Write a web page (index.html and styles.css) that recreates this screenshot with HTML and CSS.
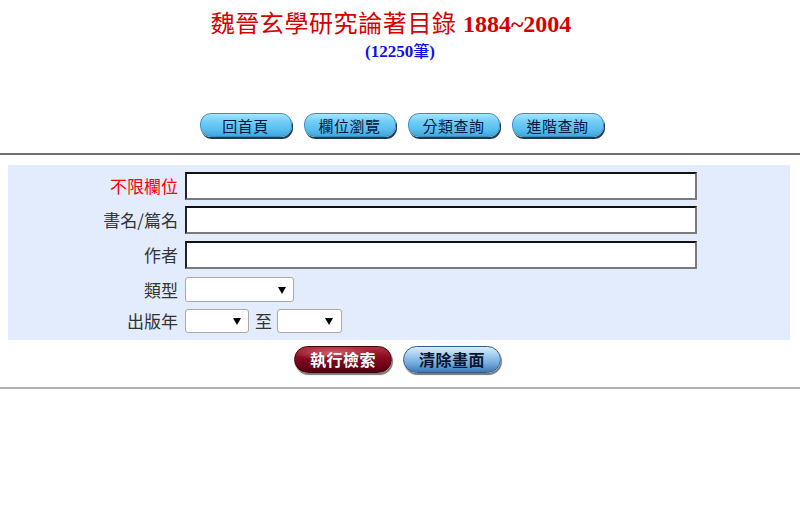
FILE: index.html
```html
<!DOCTYPE html>
<html lang="zh-Hant">
<head>
<meta charset="utf-8">
<title>魏晉玄學研究論著目錄</title>
<link rel="stylesheet" href="styles.css">
</head>
<body>
<header class="head">
  <h1 class="title"><span class="title-zh">魏晉玄學研究論著目錄</span> <span class="title-num">1884~2004</span></h1>
  <div class="count">(12250<span class="count-zh">筆</span>)</div>
</header>
<nav class="nav">
  <a class="nav-btn" href="#">回首頁</a>
  <a class="nav-btn" href="#">欄位瀏覽</a>
  <a class="nav-btn" href="#">分類查詢</a>
  <a class="nav-btn" href="#">進階查詢</a>
</nav>
<hr class="rule rule-top">
<form class="search">
  <div class="panel">
    <div class="row row1">
      <label class="lbl lbl-red">不限欄位</label>
      <input class="txt" type="text">
    </div>
    <div class="row row2">
      <label class="lbl">書名/篇名</label>
      <input class="txt" type="text">
    </div>
    <div class="row row3">
      <label class="lbl">作者</label>
      <input class="txt" type="text">
    </div>
    <div class="row row4">
      <label class="lbl">類型</label>
      <span class="sel sel-type"><select><option></option></select></span>
    </div>
    <div class="row row5">
      <label class="lbl">出版年</label>
      <span class="sel sel-year"><select><option></option></select></span>
      <span class="to">至</span>
      <span class="sel sel-year2"><select><option></option></select></span>
    </div>
  </div>
  <div class="actions">
    <button type="button" class="act act-go">執行檢索</button>
    <button type="button" class="act act-clear">清除畫面</button>
  </div>
</form>
<hr class="rule rule-bottom">
</body>
</html>
```
FILE: styles.css
```css
html, body {
  margin: 0;
  padding: 0;
  background: #ffffff;
}
body {
  font-family: "Noto Sans CJK TC", "Noto Sans", sans-serif;
  color: #333;
}
.head {
  text-align: center;
  padding-top: 6px;
}
.title {
  margin: 0;
  font-size: 25px;
  line-height: 32px;
  color: #d40000;
  font-weight: normal;
  font-family: "Liberation Serif", "Noto Sans CJK TC", serif;
  padding-right: 18px;
}
.title-zh {
  font-family: "Noto Sans CJK TC", serif;
  font-weight: 400;
  font-size: 24px;
  letter-spacing: 0.6px;
}
.title-num {
  font-weight: bold;
  font-size: 24px;
}
.count {
  font-family: "Liberation Serif", "Noto Sans CJK TC", serif;
  font-weight: bold;
  font-size: 17px;
  line-height: 20px;
  color: #1010e6;
  margin-top: 0;
}
.count-zh {
  font-family: "Noto Sans CJK TC", sans-serif;
  font-weight: 500;
  font-size: 16px;
}
.nav {
  display: flex;
  justify-content: center;
  gap: 12px;
  margin-top: 51px;
  padding-left: 3px;
}
.nav-btn {
  display: flex;
  align-items: center;
  justify-content: center;
  width: 90px;
  height: 22px;
  border-radius: 11px;
  background: linear-gradient(#a8e4ff 0%, #70cdf5 35%, #58bfee 70%, #3ea8dc 100%);
  border: 1px solid #3b8fc2;
  box-shadow: 1px 2px 0 #1b3a55;
  color: #06163f;
  font-size: 15px;
  text-decoration: none;
  letter-spacing: 0.5px;
}
.rule {
  border: 0;
  margin: 0;
  height: 2px;
}
.rule-top {
  background: #6f6f6f;
  margin-top: 16px;
}
.search {
  margin: 0;
}
.panel {
  margin: 10px 10px 0 8px;
  background: #e2ecfc;
  padding: 7px 0;
  display: flex;
  flex-direction: column;
}
.row {
  display: flex;
  align-items: center;
}
.row1 { height: 28px; }
.row2 { height: 28px; margin-top: 6px; }
.row3 { height: 28px; margin-top: 7px; }
.row4 { height: 25px; margin-top: 8px; }
.row5 { height: 24px; margin-top: 7px; }
.lbl {
  width: 170px;
  margin-right: 7px;
  text-align: right;
  font-size: 17px;
  line-height: 22px;
  color: #333;
  flex: none;
}
.lbl-red {
  color: #f00;
}
.txt {
  box-sizing: border-box;
  width: 512px;
  height: 28px;
  margin: 0;
  background: #fff;
  border-style: solid;
  border-width: 2px;
  border-color: #111 #7a7a7a #7a7a7a #222;
  padding: 0 4px;
  font-size: 15px;
  outline: none;
}
.sel {
  position: relative;
  display: inline-block;
}
.sel select {
  appearance: none;
  -webkit-appearance: none;
  box-sizing: border-box;
  display: block;
  background: #fff;
  border: 1px solid #a9a9a9;
  border-radius: 3px;
  margin: 0;
  padding: 0;
  font-size: 14px;
}
.sel::after {
  content: "";
  position: absolute;
  top: 50%;
  margin-top: -3px;
  width: 0;
  height: 0;
  border-left: 4px solid transparent;
  border-right: 4px solid transparent;
  border-top: 7px solid #000;
  pointer-events: none;
}
.sel-type select { width: 109px; height: 25px; }
.sel-type::after { right: 8px; }
.sel-year select { width: 64px; height: 24px; }
.sel-year::after { right: 8px; }
.sel-year2 select { width: 65px; height: 24px; }
.sel-year2::after { right: 9px; }
.to {
  font-size: 17px;
  line-height: 22px;
  margin: 0 5px 0 6px;
  color: #333;
}
.actions {
  display: flex;
  justify-content: center;
  gap: 11px;
  margin-top: 6px;
  padding-right: 5px;
}
.act {
  width: 98px;
  height: 27px;
  border-radius: 14px;
  font-family: "Noto Sans CJK TC", sans-serif;
  font-size: 16px;
  font-weight: bold;
  letter-spacing: 0.5px;
  padding: 0;
  line-height: 25px;
  cursor: pointer;
}
.act-go {
  background: radial-gradient(ellipse 60% 40% at 40% 25%, rgba(255,150,160,0.55), rgba(255,150,160,0) 70%), linear-gradient(#b03040 0%, #8a0c20 40%, #6a0014 80%, #4e000e 100%);
  border: 1px solid #4a0010;
  box-shadow: 1px 2px 1px #777;
  color: #fff;
}
.act-clear {
  background: linear-gradient(#d8eefc 0%, #a7d0f0 30%, #6ea5d8 70%, #3e78b2 100%);
  border: 1px solid #2e5f90;
  box-shadow: 1px 2px 1px #777;
  color: #0a1530;
}
.rule-bottom {
  background: #b0b0b0;
  margin-top: 14px;
}
```
